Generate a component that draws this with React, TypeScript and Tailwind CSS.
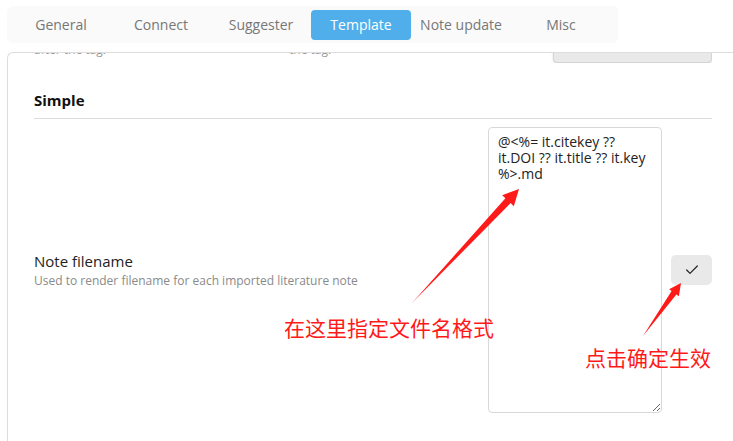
import React from 'react';
import { Check } from 'lucide-react';

const tabs = ['General', 'Connect', 'Suggester', 'Template', 'Note update', 'Misc'];

const filenameTemplate = '@<%= it.citekey ?? it.DOI ?? it.title ?? it.key %>.md';

const App = () => {
  return (
    <div
      className="relative w-[733px] h-[441px] overflow-hidden bg-white"
      style={{ fontFamily: '"Open Sans", "Noto Sans CJK SC", sans-serif' }}
    >
      {/* tab bar */}
      <div className="ml-[7px] mt-[6px] flex h-[37px] w-[611px] items-center rounded-md bg-[#fafafa] px-[4px]">
        {tabs.map((tab) => (
          <div
            key={tab}
            className={
              tab === 'Template'
                ? 'flex h-[30px] w-[100px] items-center justify-center rounded-[4px] bg-[#50afea] text-[14px] text-white'
                : 'flex h-[30px] w-[100px] items-center justify-center text-[14px] text-[#777777]'
            }
          >
            {tab}
          </div>
        ))}
      </div>

      {/* settings panel */}
      <div className="ml-[7px] mt-[9px] h-[400px] overflow-hidden rounded-tl-md border-l border-t border-[#dddddd] pl-[26px] pr-[21px]">
        {/* previous row, scrolled mostly out of view */}
        <div className="flex h-[10px] items-end overflow-hidden">
          <div className="w-[255px] pb-[5px] text-[12px] leading-[16px] text-[#999999]">after the tag.</div>
          <div className="flex-1 pb-[5px] text-[12px] leading-[16px] text-[#999999]">the tag.</div>
          <div className="h-[32px] w-[159px] rounded-[4px] border border-[#d4d4d4] bg-[#e9e9e9] shadow-sm" />
        </div>

        <div className="mt-[27px] border-b border-[#dddddd] pb-[7px] text-[15px] font-bold leading-[21px] text-[#111111]">
          Simple
        </div>

        <div className="flex items-center py-[8px]">
          <div className="flex-1">
            <div className="text-[15px] leading-[20px] text-[#222222]">Note filename</div>
            <div className="mt-[2px] text-[12px] leading-[16px] text-[#8a8a8a]">
              Used to render filename for each imported literature note
            </div>
          </div>
          <textarea
            readOnly
            value={filenameTemplate}
            className="h-[286px] w-[174px] resize-y rounded-[4px] border border-[#d8d8d8] pl-[9px] pr-[10px] pt-[6px] text-[14px] leading-[16px] text-[#222222] outline-none"
          />
          <button className="ml-[9px] flex h-[30px] w-[41px] items-center justify-center rounded-[5px] bg-[#e9e9e9] text-[#222222]">
            <Check className="h-[16px] w-[16px]" strokeWidth={1.8} />
          </button>
        </div>
      </div>

      {/* annotations */}
      <svg className="pointer-events-none absolute left-0 top-0" width="733" height="441">
        <polygon
          points="412,303 505.4,198.3 502.2,195.2 519,189 513.8,206.2 510.6,203.1"
          fill="#ff1a1a"
        />
        <polygon
          points="643,336 671.6,291 669.1,289.3 681,283 678.9,296.3 676.4,294.6"
          fill="#ff1a1a"
        />
      </svg>
      <div className="absolute left-[284px] top-[315px] text-[21px] leading-[26px] text-[#ff1a1a]">
        在这里指定文件名格式
      </div>
      <div className="absolute left-[585px] top-[345px] text-[21px] leading-[26px] text-[#ff1a1a]">
        点击确定生效
      </div>
    </div>
  );
};

export default App;
